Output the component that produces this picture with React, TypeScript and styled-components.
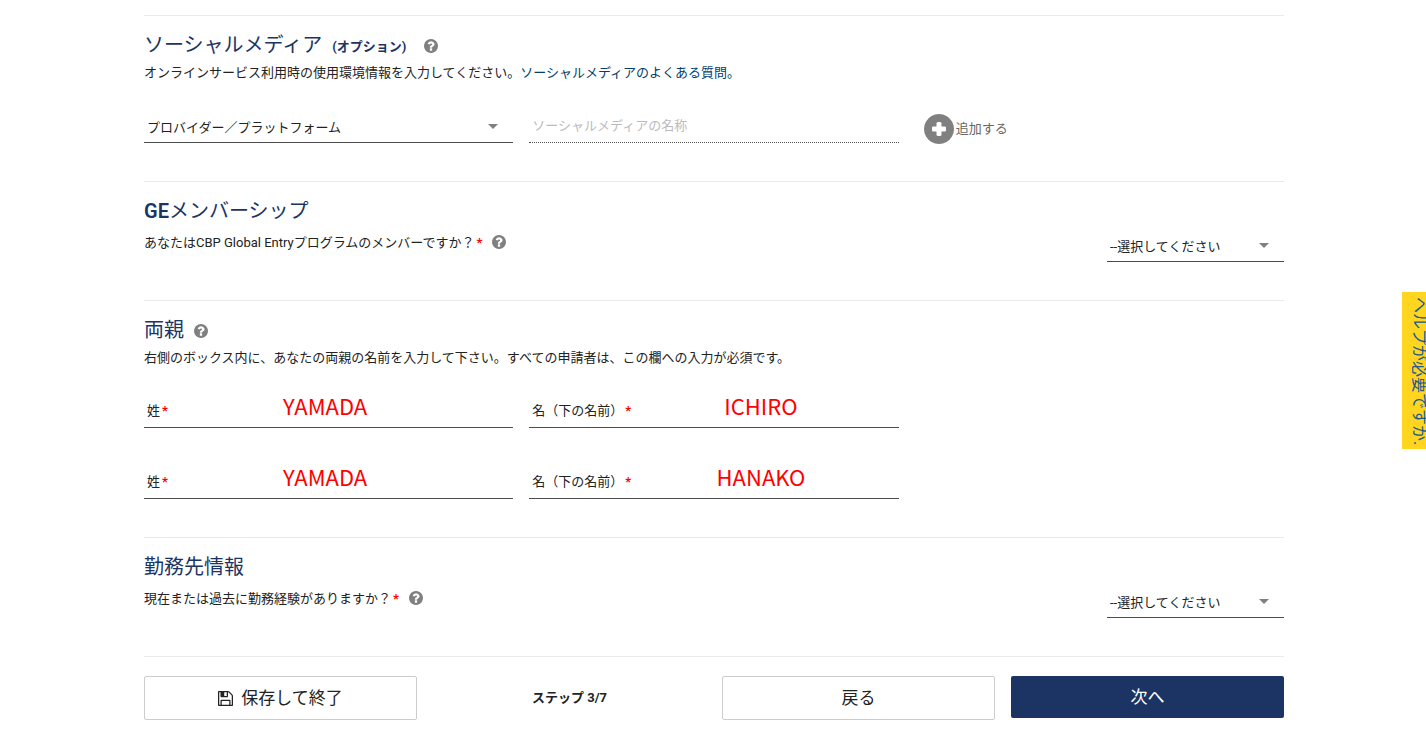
import React from "react";
import styled, { createGlobalStyle, css } from "styled-components";

const GlobalStyle = createGlobalStyle`
  *, *::before, *::after { box-sizing: border-box; }
  body {
    margin: 0;
    background: #fff;
    color: #222;
    font: 400 13px/20px Roboto, "Noto Sans CJK JP", sans-serif;
  }
  button, input, select { font: inherit; color: inherit; }
  h2, p { margin: 0; }
`;

const Page = styled.main`
  padding: 15px 142px 32px 144px;
`;

const Section = styled.section`
  border-top: 1px solid #eaeaea;
  padding: 14px 0 38px;
`;

const Heading = styled.h2`
  display: flex;
  align-items: center;
  height: 30px;
  color: #1c3464;
  font-size: 20px;
  font-weight: 400;
  line-height: 30px;
`;

const Latin = styled.span`
  font-weight: 600;
`;

const Optional = styled.small`
  margin: 4px 0 0 10px;
  font-size: 13px;
  font-weight: 700;
`;

const Text = styled.p`
  margin-top: 3px;
`;

const Link = styled.a`
  color: #00406f;
  text-decoration: none;
`;

const Required = styled.span`
  margin-left: 2px;
  color: #f00;
  font-weight: 700;
`;

const HelpButton = styled.button<{ $gap: number; $drop?: number }>`
  display: inline-flex;
  flex: none;
  margin: ${(p) => p.$drop ?? 0}px 0 0 ${(p) => p.$gap}px;
  padding: 0;
  border: 0;
  background: none;
  color: #808080;
  cursor: pointer;
`;

const FieldRow = styled.div<{ $top: number }>`
  display: grid;
  grid-template-columns: repeat(3, 1fr);
  column-gap: 16px;
  margin-top: ${(p) => p.$top}px;
`;

const underline = css`
  border: 0;
  border-bottom: 1px solid #4d4d4d;
`;

const SelectBox = styled.div`
  display: grid;
  align-items: center;
  height: 32px;
  ${underline}
  > * { grid-area: 1 / 1; }
  > svg { justify-self: end; margin-right: 15px; pointer-events: none; }
`;

const Select = styled.select`
  width: 100%;
  height: 31px;
  padding: 3px 32px 0 3px;
  border: 0;
  outline: 0;
  background: none;
  appearance: none;
`;

const SocialName = styled.input`
  width: 100%;
  height: 32px;
  padding: 0 3px 2px;
  ${underline}
  border-bottom-style: dotted;
  border-radius: 0;
  outline: 0;
  background: none;
  &:disabled::placeholder { color: #bbb; opacity: 1; }
`;

const AddButton = styled.button`
  display: flex;
  align-items: center;
  justify-self: start;
  gap: 2px;
  height: 32px;
  margin-left: 9px;
  padding: 3px 0 0;
  border: 0;
  background: none;
  color: #666;
  cursor: pointer;
  svg { color: #808080; }
`;

const Question = styled.div`
  display: flex;
  align-items: flex-start;
  justify-content: space-between;
`;

const QuestionLabel = styled.div`
  display: flex;
  align-items: center;
  margin-top: 7px;
  ${HelpButton} { margin-bottom: 2px; }
`;

const Answer = styled.div`
  width: 177px;
  margin-top: 4px;
`;

const NameField = styled.label`
  display: flex;
  align-items: flex-end;
  height: 34px;
  padding: 0 0 6px 3px;
  white-space: nowrap;
  ${underline}
`;

const NameInput = styled.input<{ $end: number }>`
  flex: 1;
  min-width: 0;
  height: 28px;
  padding: 0 ${(p) => p.$end}px 4px 0;
  border: 0;
  outline: 0;
  background: none;
  color: #f00;
  font: 400 22px/24px "Noto Sans CJK JP", sans-serif;
  text-align: center;
`;

const Footer = styled.footer`
  display: grid;
  grid-template-columns: repeat(4, 1fr);
  align-items: start;
  column-gap: 16px;
  padding-top: 19px;
  border-top: 1px solid #eaeaea;
`;

const Button = styled.button<{ $primary?: boolean }>`
  display: flex;
  align-items: center;
  justify-content: center;
  gap: 8px;
  height: ${(p) => (p.$primary ? 42 : 44)}px;
  padding: 0;
  border: ${(p) => (p.$primary ? "0" : "1px solid #ccc")};
  border-radius: 2px;
  background: ${(p) => (p.$primary ? "#1c3464" : "#fff")};
  color: ${(p) => (p.$primary ? "#fff" : "#222")};
  font-size: 17px;
  cursor: pointer;
`;

const Step = styled.strong`
  align-self: center;
  text-align: center;
`;

const HelpTab = styled.button`
  position: fixed;
  top: 292px;
  right: 0;
  width: 24px;
  height: 157px;
  padding: 5px 0 0 5px;
  border: 0;
  overflow: hidden;
  background: #ffd520;
  color: #205b90;
  cursor: pointer;
  span {
    display: block;
    width: 24px;
    height: 152px;
    font-size: 16px;
    line-height: 24px;
    text-align: left;
    white-space: nowrap;
    writing-mode: vertical-rl;
    text-orientation: sideways;
  }
`;

const circle =
  "M1664 896q0 209-103 385.500t-279.500 279.500-385.500 103-385.500-103-279.500-279.500-103-385.500 103-385.500 279.500-279.500 385.500-103 385.500 103 279.500 279.500 103 385.500z";

function Help({ gap, drop }: { gap: number; drop?: number }) {
  return (
    <HelpButton type="button" aria-label="ヘルプ" $gap={gap} $drop={drop}>
      <svg width="14" height="14" viewBox="128 128 1536 1536" fill="currentColor" fillRule="evenodd">
        <path d={`M1024 1376v-192q0-14-9-23t-23-9h-192q-14 0-23 9t-9 23v192q0 14 9 23t23 9h192q14 0 23-9t9-23zm256-672q0-88-55.500-163t-138.500-116-170-41q-243 0-371 213-15 24 8 42l132 100q7 6 19 6 16 0 25-12 53-68 86-92 34-24 86-24 48 0 85.500 26t37.500 59q0 38-20 61t-68 45q-63 28-115.500 86.500t-52.500 125.500v36q0 14 9 23t23 9h192q14 0 23-9t9-23q0-19 21.500-49.500t54.500-49.500q32-18 49-28.500t46-35 44.500-48 28-60.500 12.500-81z${circle}`} />
      </svg>
    </HelpButton>
  );
}

function Dropdown({ label, text }: { label: string; text: string }) {
  return (
    <SelectBox>
      <Select aria-label={label}>
        <option>{text}</option>
      </Select>
      <svg width="10" height="5" viewBox="0 0 10 5" fill="#808080">
        <path d="M0 0h10L5 5z" />
      </svg>
    </SelectBox>
  );
}

function ParentRow({ family, given, top }: { family: string; given: string; top: number }) {
  return (
    <FieldRow $top={top}>
      <NameField>
        姓<Required>*</Required>
        <NameInput $end={31} defaultValue={family} />
      </NameField>
      <NameField>
        名（下の名前）<Required>*</Required>
        <NameInput $end={8} defaultValue={given} />
      </NameField>
    </FieldRow>
  );
}

export default function App() {
  return (
    <>
      <GlobalStyle />
      <Page>
        <Section>
          <Heading>
            ソーシャルメディア <Optional>(オプション)</Optional>
            <Help gap={18} drop={2} />
          </Heading>
          <Text>
            オンラインサービス利用時の使用環境情報を入力してください。
            <Link href="#faq">ソーシャルメディアのよくある質問。</Link>
          </Text>
          <FieldRow $top={28}>
            <Dropdown label="プロバイダー／プラットフォーム" text="プロバイダー／プラットフォーム" />
            <SocialName aria-label="ソーシャルメディアの名称" placeholder="ソーシャルメディアの名称" disabled />
            <AddButton type="button">
              <svg width="30" height="30" viewBox="128 128 1536 1536" fill="currentColor" fillRule="evenodd">
                <path d={`M1254 960v-128q0-26-19-45t-45-19h-166v-166q0-26-19-45t-45-19h-128q-26 0-45 19t-19 45v166h-166q-26 0-45 19t-19 45v128q0 26 19 45t45 19h166v166q0 26 19 45t45 19h128q26 0 45-19t19-45v-166h166q26 0 45-19t19-45z${circle}`} />
              </svg>
              追加する
            </AddButton>
          </FieldRow>
        </Section>

        <Section>
          <Heading>
            <Latin>GE</Latin>メンバーシップ
          </Heading>
          <Question>
            <QuestionLabel>
              あなたはCBP Global Entryプログラムのメンバーですか？<Required>*</Required>
              <Help gap={10} />
            </QuestionLabel>
            <Answer>
              <Dropdown label="GEメンバーシップ" text="--選択してください" />
            </Answer>
          </Question>
        </Section>

        <Section>
          <Heading>
            両親
            <Help gap={10} drop={2} />
          </Heading>
          <Text>右側のボックス内に、あなたの両親の名前を入力して下さい。すべての申請者は、この欄への入力が必須です。</Text>
          <ParentRow family="YAMADA" given="ICHIRO" top={26} />
          <ParentRow family="YAMADA" given="HANAKO" top={37} />
        </Section>

        <Section>
          <Heading>勤務先情報</Heading>
          <Question>
            <QuestionLabel>
              現在または過去に勤務経験がありますか？<Required>*</Required>
              <Help gap={10} />
            </QuestionLabel>
            <Answer>
              <Dropdown label="勤務先情報" text="--選択してください" />
            </Answer>
          </Question>
        </Section>

        <Footer>
          <Button type="button">
            <svg width="15" height="15" viewBox="0 128 1536 1536" fill="currentColor">
              <path d="M384 1536h768v-384h-768v384zm896 0h128v-896q0-14-10-38.500t-20-34.500l-281-281q-10-10-34-20t-39-10v416q0 40-28 68t-68 28h-576q-40 0-68-28t-28-68v-416h-128v1280h128v-416q0-40 28-68t68-28h832q40 0 68 28t28 68v416zm-384-928v-320q0-13-9.500-22.500t-22.500-9.500h-192q-13 0-22.500 9.500t-9.500 22.500v320q0 13 9.500 22.500t22.500 9.500h192q13 0 22.500-9.500t9.500-22.500zm640 32v928q0 40-28 68t-68 28h-1344q-40 0-68-28t-28-68v-1344q0-40 28-68t68-28h928q40 0 88 20t76 48l280 280q28 28 48 76t20 88z" />
            </svg>
            保存して終了
          </Button>
          <Step>ステップ 3/7</Step>
          <Button type="button">戻る</Button>
          <Button type="button" $primary>次へ</Button>
        </Footer>
      </Page>
      <HelpTab type="button">
        <span>ヘルプが必要ですか.</span>
      </HelpTab>
    </>
  );
}
